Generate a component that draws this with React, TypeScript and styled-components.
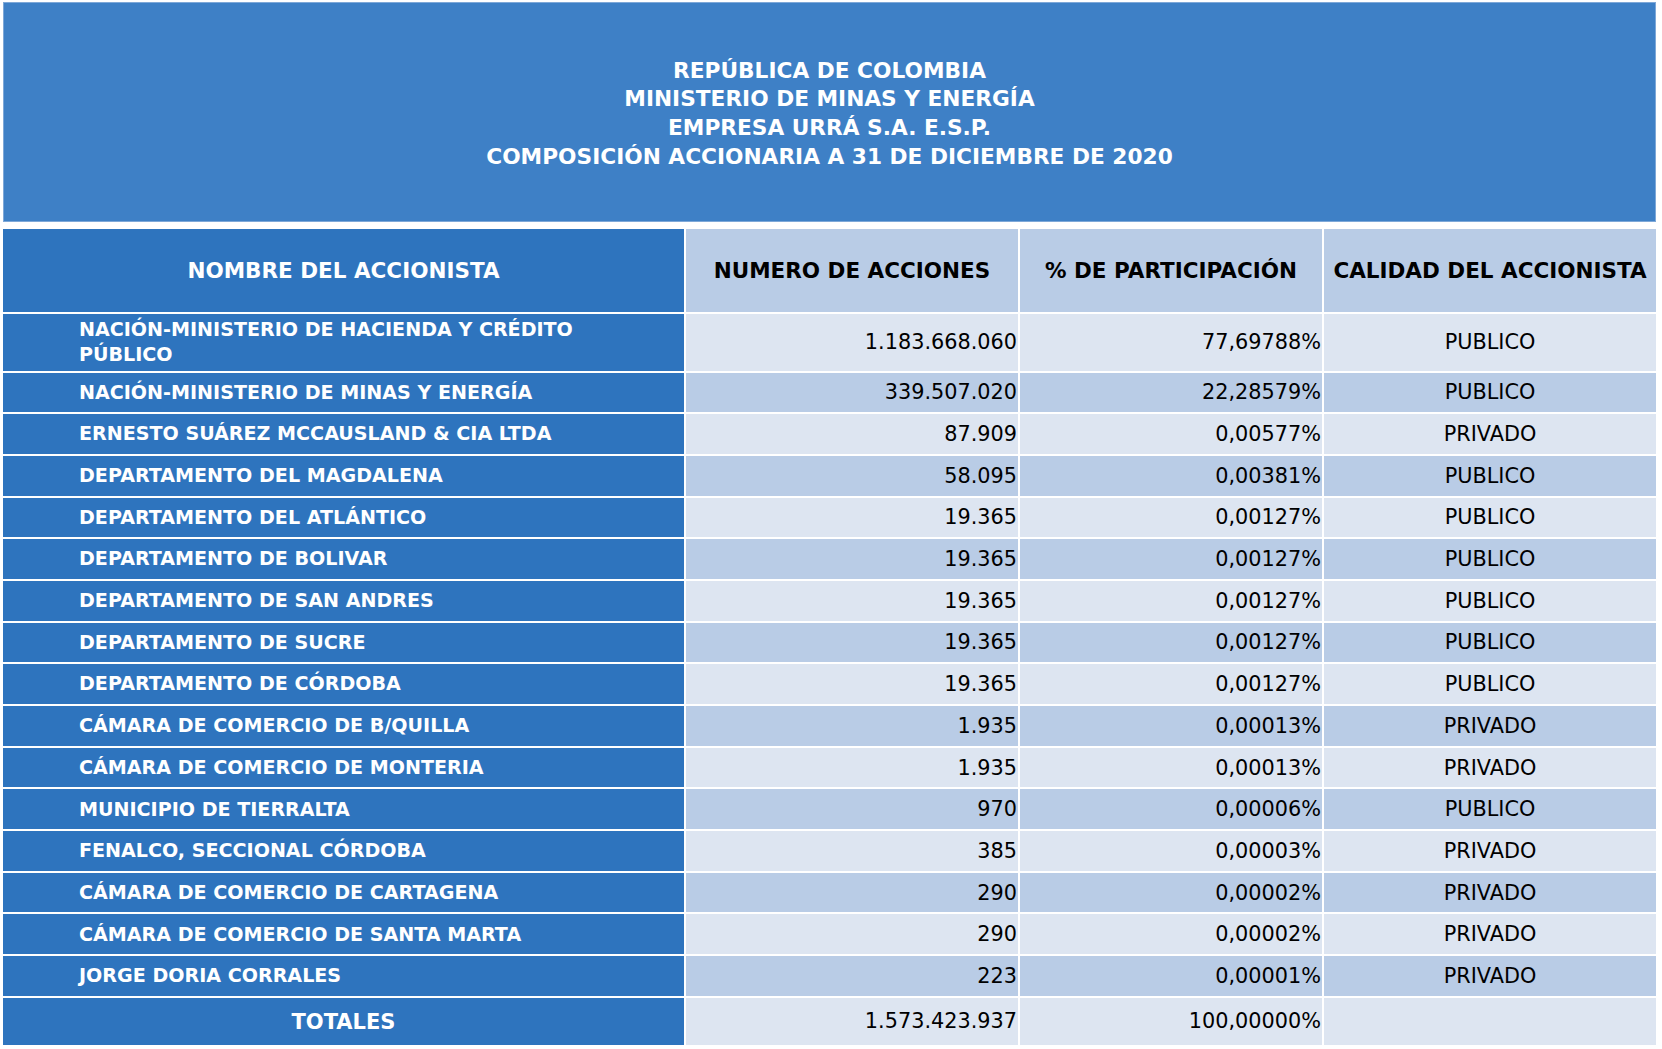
import React from "react";
import styled, { createGlobalStyle } from "styled-components";

const GlobalStyle = createGlobalStyle`
  html, body {
    margin: 0;
    padding: 0;
    background: #ffffff;
  }
  body {
    font-family: "DejaVu Sans", Verdana, sans-serif;
  }
`;

const Page = styled.div`
  width: 1662px;
  height: 1049px;
  box-sizing: border-box;
  padding: 2px 6px 0 3px;
  display: flex;
  flex-direction: column;
  gap: 7px;
  background: #ffffff;
`;

const TitleBox = styled.header`
  height: 220px;
  box-sizing: border-box;
  border: 1px solid #7ea8d8;
  background: #3e80c6;
  display: flex;
  flex-direction: column;
  align-items: center;
  justify-content: center;
  color: #ffffff;
  font-weight: bold;
  font-size: 21.7px;
  line-height: 28.6px;
  padding-top: 4px;
`;

const TitleLine = styled.div`
  white-space: nowrap;
`;

const Sheet = styled.div`
  display: grid;
  grid-template-columns: 681px 332px 302px 332px;
  grid-template-rows: 82.5px 57px repeat(15, 39.7px) 47px;
  gap: 2px;
  background: #ffffff;
`;

type Shade = "head" | "light" | "mid";

const shadeColor: Record<Shade, string> = {
  head: "#2e74be",
  light: "#dde5f1",
  mid: "#b9cce6",
};

const Cell = styled.div<{ $shade: Shade }>`
  display: flex;
  align-items: center;
  box-sizing: border-box;
  background: ${(p) => shadeColor[p.$shade]};
  color: ${(p) => (p.$shade === "head" ? "#ffffff" : "#000000")};
  overflow: hidden;
`;

const HeadCell = styled(Cell)`
  justify-content: center;
  font-weight: bold;
  font-size: 21.5px;
  white-space: nowrap;
`;

const NameCell = styled(Cell)`
  padding: 0 45px 0 76px;
  font-weight: bold;
  font-size: 19.1px;
  line-height: 25.4px;
  color: #ffffff;
`;

const TotalLabel = styled(Cell)`
  justify-content: center;
  font-weight: bold;
  font-size: 21px;
  color: #ffffff;
  padding-top: 2px;
`;

const NumberCell = styled(Cell)`
  justify-content: flex-end;
  padding-right: 1px;
  font-size: 20.8px;
  white-space: nowrap;
`;

const QualityCell = styled(Cell)`
  justify-content: center;
  font-size: 20.8px;
  white-space: nowrap;
`;

type Row = {
  name: string;
  shares: string;
  pct: string;
  kind: string;
};

const rows: Row[] = [
  { name: "NACIÓN-MINISTERIO DE HACIENDA Y CRÉDITO PÚBLICO", shares: "1.183.668.060", pct: "77,69788%", kind: "PUBLICO" },
  { name: "NACIÓN-MINISTERIO DE MINAS Y ENERGÍA", shares: "339.507.020", pct: "22,28579%", kind: "PUBLICO" },
  { name: "ERNESTO SUÁREZ MCCAUSLAND & CIA LTDA", shares: "87.909", pct: "0,00577%", kind: "PRIVADO" },
  { name: "DEPARTAMENTO DEL MAGDALENA", shares: "58.095", pct: "0,00381%", kind: "PUBLICO" },
  { name: "DEPARTAMENTO DEL ATLÁNTICO", shares: "19.365", pct: "0,00127%", kind: "PUBLICO" },
  { name: "DEPARTAMENTO DE BOLIVAR", shares: "19.365", pct: "0,00127%", kind: "PUBLICO" },
  { name: "DEPARTAMENTO DE SAN ANDRES", shares: "19.365", pct: "0,00127%", kind: "PUBLICO" },
  { name: "DEPARTAMENTO DE SUCRE", shares: "19.365", pct: "0,00127%", kind: "PUBLICO" },
  { name: "DEPARTAMENTO DE CÓRDOBA", shares: "19.365", pct: "0,00127%", kind: "PUBLICO" },
  { name: "CÁMARA DE COMERCIO DE B/QUILLA", shares: "1.935", pct: "0,00013%", kind: "PRIVADO" },
  { name: "CÁMARA DE COMERCIO DE MONTERIA", shares: "1.935", pct: "0,00013%", kind: "PRIVADO" },
  { name: "MUNICIPIO DE TIERRALTA", shares: "970", pct: "0,00006%", kind: "PUBLICO" },
  { name: "FENALCO, SECCIONAL CÓRDOBA", shares: "385", pct: "0,00003%", kind: "PRIVADO" },
  { name: "CÁMARA DE COMERCIO DE CARTAGENA", shares: "290", pct: "0,00002%", kind: "PRIVADO" },
  { name: "CÁMARA DE COMERCIO DE SANTA MARTA", shares: "290", pct: "0,00002%", kind: "PRIVADO" },
  { name: "JORGE DORIA CORRALES", shares: "223", pct: "0,00001%", kind: "PRIVADO" },
];

export default function App() {
  return (
    <>
      <GlobalStyle />
      <Page>
        <TitleBox>
          <TitleLine>REPÚBLICA DE COLOMBIA</TitleLine>
          <TitleLine>MINISTERIO DE MINAS Y ENERGÍA</TitleLine>
          <TitleLine>EMPRESA URRÁ S.A. E.S.P.</TitleLine>
          <TitleLine>COMPOSICIÓN ACCIONARIA A 31 DE DICIEMBRE DE 2020</TitleLine>
        </TitleBox>
        <Sheet>
          <HeadCell $shade="head">NOMBRE DEL ACCIONISTA</HeadCell>
          <HeadCell $shade="mid">NUMERO DE ACCIONES</HeadCell>
          <HeadCell $shade="mid">% DE PARTICIPACIÓN</HeadCell>
          <HeadCell $shade="mid">CALIDAD DEL ACCIONISTA</HeadCell>
          {rows.map((r, i) => {
            const shade: Shade = i % 2 === 0 ? "light" : "mid";
            return (
              <React.Fragment key={r.name}>
                <NameCell $shade="head">{r.name}</NameCell>
                <NumberCell $shade={shade}>{r.shares}</NumberCell>
                <NumberCell $shade={shade}>{r.pct}</NumberCell>
                <QualityCell $shade={shade}>{r.kind}</QualityCell>
              </React.Fragment>
            );
          })}
          <TotalLabel $shade="head">TOTALES</TotalLabel>
          <NumberCell $shade="light">1.573.423.937</NumberCell>
          <NumberCell $shade="light">100,00000%</NumberCell>
          <QualityCell $shade="light"></QualityCell>
        </Sheet>
      </Page>
    </>
  );
}
